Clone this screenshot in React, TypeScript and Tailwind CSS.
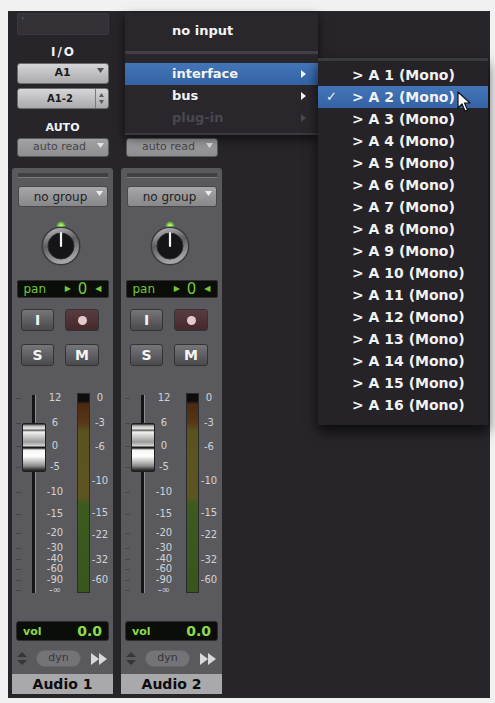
import React from "react";

const leftScale = [
  { label: "12", y: 6 },
  { label: "6", y: 31 },
  { label: "0", y: 54 },
  { label: "-5", y: 75 },
  { label: "-10", y: 100 },
  { label: "-15", y: 122 },
  { label: "-20", y: 141 },
  { label: "-30", y: 156 },
  { label: "-40", y: 167 },
  { label: "-60", y: 177 },
  { label: "-90", y: 188 },
  { label: "-∞", y: 198 },
];

const rightScale = [
  { label: "0", y: 6 },
  { label: "-3", y: 31 },
  { label: "-6", y: 55 },
  { label: "-10", y: 89 },
  { label: "-15", y: 121 },
  { label: "-22", y: 143 },
  { label: "-32", y: 168 },
  { label: "-60", y: 188 },
];

function DownArrow({ color }: { color: string }) {
  return (
    <svg width="7" height="5" viewBox="0 0 7 5" className="absolute right-[4px] top-[4px]">
      <path d="M0 0H7L3.5 5Z" fill={color} />
    </svg>
  );
}

function Knob() {
  return (
    <svg width="50" height="48" viewBox="0 0 50 48">
      <defs>
        <radialGradient id="led" cx="0.5" cy="0.5" r="0.5">
          <stop offset="0" stopColor="#d6ff9a" />
          <stop offset="0.5" stopColor="#7fdc3c" />
          <stop offset="1" stopColor="#7fdc3c" stopOpacity="0" />
        </radialGradient>
        <linearGradient id="ring" x1="0" y1="0" x2="0.3" y2="1">
          <stop offset="0" stopColor="#c2c2c6" />
          <stop offset="0.5" stopColor="#5e5e62" />
          <stop offset="1" stopColor="#a4a4a8" />
        </linearGradient>
      </defs>
      <ellipse cx="24" cy="5" rx="5" ry="5" fill="url(#led)" />
      <circle cx="24" cy="25" r="19.5" fill="#3a3a3e" />
      <circle cx="24" cy="25" r="18" fill="url(#ring)" />
      <circle cx="24" cy="25" r="13" fill="#151417" />
      <circle cx="24" cy="25" r="13" fill="none" stroke="#2c2c30" strokeWidth="1" />
      <line x1="24" y1="25" x2="24" y2="12" stroke="#f2f2f2" strokeWidth="2.2" strokeLinecap="round" />
    </svg>
  );
}

function Strip({ name, covered }: { name: string; covered?: boolean }) {
  return (
    <div className="w-[101px] h-[687px] flex flex-col shrink-0">
      {/* I/O + automation, on the dark panel */}
      <div className="h-[157px] flex flex-col items-center">
        <div className="mt-[2px] h-[22px] w-[92px] bg-[#333136] border border-[#3b393f] rounded-[2px] pl-[4px] text-[9px] leading-[14px] text-[#77757c]">
          {covered ? "" : "'"}
        </div>
        <div className="mt-[10px] h-[14px] leading-[14px] text-[12px] font-bold text-[#f2f2f2] tracking-[2px] pl-[2px]">
          {covered ? "" : "I/O"}
        </div>
        <div className="relative mt-[4px] h-[21px] w-[92px] rounded-[3px] bg-[linear-gradient(to_bottom,#d6d6d8,#aaaaac)] border border-[#6c6c70] flex items-center justify-center text-[11px] font-bold text-[#1c1c1e]">
          {covered ? "" : "A1"}
          <DownArrow color="#505054" />
        </div>
        <div className="mt-[4px] h-[21px] w-[92px] rounded-[3px] bg-[linear-gradient(to_bottom,#d6d6d8,#aaaaac)] border border-[#6c6c70] flex text-[10px] font-bold text-[#1c1c1e]">
          <div className="flex-1 flex items-center justify-center pl-[8px]">{covered ? "" : "A1-2"}</div>
          <div className="w-[13px] border-l border-[#7a7a7e] flex items-center justify-center">
            <svg width="5" height="11" viewBox="0 0 5 11">
              <path d="M0 4H5L2.5 0Z M0 7H5L2.5 11Z" fill="#5a5a5e" />
            </svg>
          </div>
        </div>
        <div className="mt-[12px] h-[14px] leading-[14px] text-[11px] font-bold text-[#f2f2f2]">
          {covered ? "" : "AUTO"}
        </div>
        <div className="relative mt-[3px] h-[19px] w-[92px] rounded-[3px] bg-[linear-gradient(to_bottom,#a2a2a4,#8e8e90)] border border-[#5a5a5e] flex items-center justify-center text-[11px] text-[#46464a] pr-[6px]">
          auto read
          <DownArrow color="#e4e4e6" />
        </div>
      </div>

      {/* Channel body */}
      <div className="h-[526px] bg-[#5a5a5e] rounded-t-[3px] flex flex-col items-center">
        <div className="mt-[5px] h-[5px] w-[90px] bg-[#404044] border-b border-[#7c7c80]" />
        <div className="relative mt-[8px] h-[21px] w-[90px] rounded-[3px] bg-[linear-gradient(to_bottom,#a6a6a8,#88888a)] border border-[#48484c] flex items-center justify-center text-[12px] text-[#1e1e20] pr-[4px]">
          no group
          <DownArrow color="#ececee" />
        </div>
        <div className="mt-[14px] h-[48px] flex justify-center pr-[2px]">
          <Knob />
        </div>
        <div className="mt-[11px] h-[18px] w-[92px] rounded-[2px] bg-[#0b0d09] border border-[#2c2c2e] flex items-center px-[6px] text-[#73c83a]">
          <span className="text-[12px] leading-none">pan</span>
          <span className="ml-auto text-[8px] leading-none">▶</span>
          <span className="ml-[7px] text-[15px] leading-none">0</span>
          <span className="ml-[8px] text-[8px] leading-none">◀</span>
        </div>
        <div className="mt-[11px] h-[22px] w-full flex pl-[9px] gap-[11px]">
          <div className="w-[33px] h-full rounded-[3px] bg-[linear-gradient(to_bottom,#75757a,#4a4a4e)] border border-[#333336] flex items-center justify-center text-[14px] font-bold text-[#f4f4f4]">
            I
          </div>
          <div className="w-[34px] h-full rounded-[3px] bg-[linear-gradient(to_bottom,#5a3c40,#43292c)] border border-[#333336] flex items-center justify-center">
            <div className="w-[9px] h-[9px] rounded-full bg-[#e8c9c9]" />
          </div>
        </div>
        <div className="mt-[13px] h-[22px] w-full flex pl-[9px] gap-[11px]">
          <div className="w-[33px] h-full rounded-[3px] bg-[linear-gradient(to_bottom,#75757a,#4a4a4e)] border border-[#333336] flex items-center justify-center text-[14px] font-bold text-[#f4f4f4]">
            S
          </div>
          <div className="w-[34px] h-full rounded-[3px] bg-[linear-gradient(to_bottom,#75757a,#4a4a4e)] border border-[#333336] flex items-center justify-center text-[14px] font-bold text-[#f4f4f4]">
            M
          </div>
        </div>

        {/* Fader + meter */}
        <div className="mt-[26px] h-[204px] w-full flex items-start">
          <div className="relative w-[33px] h-full">
            {leftScale.map((t) => (
              <div key={t.label} className="absolute left-[4px] w-[5px] h-px bg-[#46464a]" style={{ top: t.y }} />
            ))}
            <div className="absolute left-[20px] top-[3px] bottom-[3px] w-[4px] bg-[#141416] border-r border-[#8e8e92]" />
            <div className="absolute left-[10px] top-[31px] w-[24px] h-[49px] rounded-[2px] border border-[#1e1e20] bg-[linear-gradient(to_bottom,#2a2a2a_0px,#bdbdbd_2px,#e8e8e8_5px,#4a4a4a_6px,#f2f2f2_8px,#cfcfcf_12px,#9a9a9a_18px,#d8d8d8_22px,#1a1a1a_23px,#1a1a1a_24px,#f4f4f4_26px,#ffffff_32px,#bdbdbd_38px,#8a8a8a_42px,#2a2a2a_46px,#1a1a1a_49px)]" />
          </div>
          <div className="relative w-[20px] h-full">
            {leftScale.map((t) => (
              <div
                key={t.label}
                className="absolute left-[-4px] w-[28px] h-[12px] leading-[12px] text-center text-[10px] text-[#d2d2d6]"
                style={{ top: t.y - 6 }}
              >
                {t.label}
              </div>
            ))}
          </div>
          <div className="ml-[12px] mt-[1px] w-[13px] h-[200px] border border-[#2a2a2c] bg-[linear-gradient(to_bottom,#0d0d0d_0px,#0d0d0d_7px,#4b2a12_10px,#563616_28px,#5a5320_38px,#5c5522_104px,#3d5a1f_110px,#38561c_200px)]" />
          <div className="relative w-[20px] h-full">
            {rightScale.map((t) => (
              <div
                key={t.label}
                className="absolute left-[-4px] w-[28px] h-[12px] leading-[12px] text-center text-[10px] text-[#d2d2d6]"
                style={{ top: t.y - 6 }}
              >
                {t.label}
              </div>
            ))}
          </div>
        </div>

        <div className="mt-[25px] h-[20px] w-[93px] rounded-[3px] bg-[#0b0d09] border border-[#2c2c2e] flex items-center px-[6px] text-[#8cdc48]">
          <span className="text-[11px] font-bold leading-none">vol</span>
          <span className="ml-auto text-[14px] font-bold leading-none">0.0</span>
        </div>
        <div className="mt-[9px] h-[17px] w-full flex items-center">
          <svg width="10" height="13" viewBox="0 0 10 13" className="ml-[5px]">
            <path d="M0 5H10L5 0Z M0 8H10L5 13Z" fill="#36363a" />
          </svg>
          <div className="ml-[9px] w-[45px] h-[17px] rounded-full bg-[#747478] border border-[#66666a] flex items-center justify-center text-[11px] text-[#36363a]">
            dyn
          </div>
          <svg width="17" height="12" viewBox="0 0 17 12" className="ml-[10px]">
            <path d="M0 0L8 6L0 12Z M8 0L16 6L8 12Z" fill="#d8d8dc" />
          </svg>
        </div>
        <div className="mt-[7px] h-[20px] w-full bg-[#a9a9ac] flex items-center justify-center text-[14px] font-bold text-[#0c0c0c]">
          {name}
        </div>
      </div>
    </div>
  );
}

function SubArrow({ color }: { color: string }) {
  return (
    <svg width="5" height="8" viewBox="0 0 5 8" className="ml-auto mr-[12px]">
      <path d="M0 0L5 4L0 8Z" fill={color} />
    </svg>
  );
}

function InputMenu() {
  return (
    <div className="absolute left-[125px] top-[13px] w-[193px] h-[122px] bg-[#29272c] border-b-[2px] border-[#3a383e] shadow-[0_4px_10px_rgba(0,0,0,0.6)] pt-[7px] text-[13px] font-bold text-[#f4f4f4]">
      <div className="h-[22px] flex items-center pl-[47px]">no input</div>
      <div className="mt-[9px] h-[3px] bg-[#423f46]" />
      <div className="mt-[9px] h-[22px] flex items-center pl-[47px] bg-[linear-gradient(to_bottom,#4275b8,#3563a5)]">
        interface
        <SubArrow color="#f4f4f4" />
      </div>
      <div className="h-[22px] flex items-center pl-[47px]">
        bus
        <SubArrow color="#f4f4f4" />
      </div>
      <div className="h-[22px] flex items-center pl-[47px] text-[#4a474e]">
        plug-in
        <SubArrow color="#4a474e" />
      </div>
    </div>
  );
}

function ChannelMenu() {
  const items = Array.from({ length: 16 }, (_, i) => i + 1);
  return (
    <div className="absolute left-[318px] top-[58px] w-[170px] h-[367px] bg-[#252328] border-t-[3px] border-[#3a393e] shadow-[0_6px_12px_rgba(0,0,0,0.7)] pt-[3px] text-[14px] font-bold text-[#f2f2f2]">
      {items.map((n) => (
        <div
          key={n}
          className={`h-[22px] flex items-center ${
            n === 2 ? "bg-[linear-gradient(to_bottom,#4275b8,#3563a5)]" : ""
          }`}
        >
          <span className="w-[34px] pl-[8px] text-[13px]">{n === 2 ? "✓" : ""}</span>
          <span className="whitespace-pre">{`> A ${n} (Mono)`}</span>
        </div>
      ))}
    </div>
  );
}

export default function App() {
  return (
    <div className="relative w-[495px] h-[703px] overflow-hidden bg-[#f1f1f1] pt-[11px] pl-[8px] font-['DejaVu_Sans',sans-serif]">
      <div className="w-[482px] h-[687px] bg-[#27242a] flex pl-[4px] gap-[8px]">
        <Strip name="Audio 1" />
        <Strip name="Audio 2" covered />
      </div>
      <InputMenu />
      <ChannelMenu />
      <svg width="14" height="22" viewBox="0 0 14 22" className="absolute left-[457px] top-[91px]">
        <path d="M1 1V17L5 13L8 20L10.5 19L7.5 12H13Z" fill="#ffffff" stroke="#111111" strokeWidth="1.2" strokeLinejoin="round" />
      </svg>
    </div>
  );
}
